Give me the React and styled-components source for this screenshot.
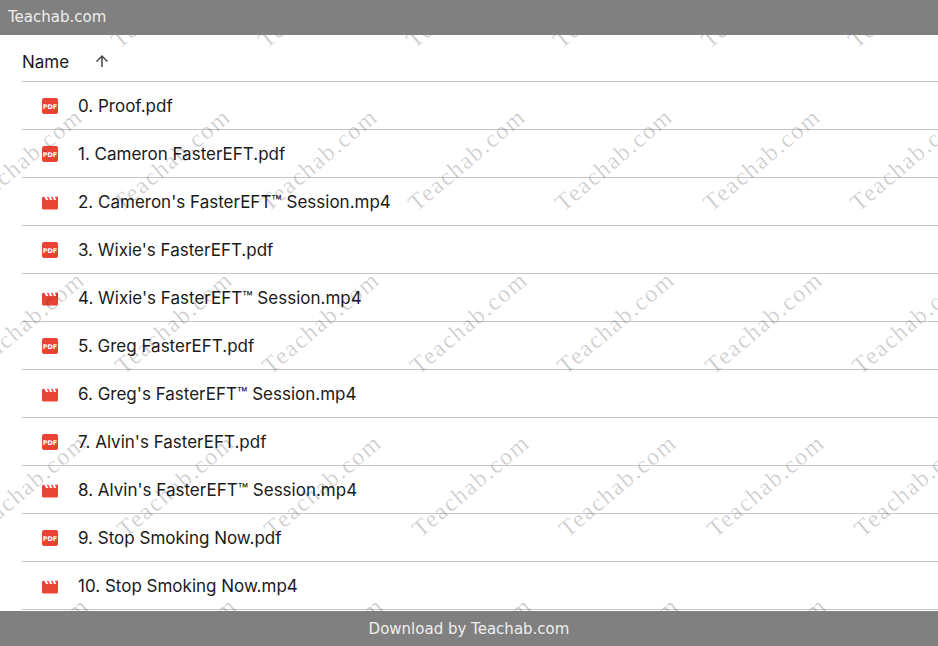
import React from 'react';
import styled, { createGlobalStyle } from 'styled-components';

const files = [
  '0. Proof.pdf',
  '1. Cameron FasterEFT.pdf',
  "2. Cameron's FasterEFT™ Session.mp4",
  "3. Wixie's FasterEFT.pdf",
  "4. Wixie's FasterEFT™ Session.mp4",
  '5. Greg FasterEFT.pdf',
  "6. Greg's FasterEFT™ Session.mp4",
  "7. Alvin's FasterEFT.pdf",
  "8. Alvin's FasterEFT™ Session.mp4",
  '9. Stop Smoking Now.pdf',
  '10. Stop Smoking Now.mp4',
];

const markRows = [-3, 160, 323, 486, 649];
const markCols = [-125, 22, 170, 317, 465, 612, 760, 907];

function PdfIcon() {
  return (
    <IconSvg viewBox="0 0 16 16">
      <rect width="16" height="16" rx="2" fill="#ea4335" />
      <PdfLabel x="8" y="10.8" textAnchor="middle">PDF</PdfLabel>
    </IconSvg>
  );
}

function VideoIcon() {
  return (
    <IconSvg viewBox="2 0.6 20 20">
      <path
        fill="#ea4335"
        d="M18 4l2 4h-3l-2-4h-2l2 4h-3l-2-4H8l2 4H7L5 4H4c-1.1 0-2 .9-2 2v12c0 1.1.9 2 2 2h16c1.1 0 2-.9 2-2V4h-4z"
      />
    </IconSvg>
  );
}

export default function App() {
  return (
    <Page>
      <GlobalStyle />
      <TopBar>Teachab.com</TopBar>
      <Main>
        <HeaderRow>
          <NameLabel>Name</NameLabel>
          <SortIcon viewBox="0 0 24 24">
            <path fill="#444746" d="M4 12l1.41 1.41L11 7.83V20h2V7.83l5.58 5.59L20 12l-8-8-8 8z" />
          </SortIcon>
        </HeaderRow>
        {files.map((name) => (
          <FileRow key={name}>
            {name.endsWith('.pdf') ? <PdfIcon /> : <VideoIcon />}
            <FileName>{name}</FileName>
          </FileRow>
        ))}
        <Marks aria-hidden="true">
          {markRows.map((top, r) =>
            markCols.map((left) => (
              <Mark key={`${r}-${left}`} style={{ left: left + r * 2, top: top - 35 }}>
                Teachab.com
              </Mark>
            ))
          )}
        </Marks>
      </Main>
      <BottomBar>Download by Teachab.com</BottomBar>
    </Page>
  );
}

const GlobalStyle = createGlobalStyle`
  html, body {
    margin: 0;
    height: 100%;
    background: #fff;
  }
`;

const Page = styled.div`
  display: flex;
  flex-direction: column;
  height: 646px;
  overflow: hidden;
`;

const TopBar = styled.div`
  flex: none;
  height: 35px;
  padding-left: 8px;
  background: #808080;
  color: #eee;
  font: 15px/35px 'DejaVu Sans', sans-serif;
  position: relative;
  z-index: 2;
`;

const BottomBar = styled(TopBar)`
  padding-left: 0;
  line-height: 37px;
  text-align: center;
`;

const Main = styled.div`
  flex: 1;
  position: relative;
  overflow: hidden;
  padding-left: 22px;
  font-family: Inter, sans-serif;
  color: #1a1a1a;
`;

const HeaderRow = styled.div`
  display: flex;
  align-items: center;
  height: 38px;
  padding-top: 8px;
  border-bottom: 1px solid #c7c7c7;
`;

const NameLabel = styled.span`
  width: 71px;
  font-size: 17px;
  font-weight: 430;
`;

const SortIcon = styled.svg`
  width: 18px;
  height: 18px;
  margin-top: -2px;
`;

const FileRow = styled.div`
  display: flex;
  align-items: center;
  height: 47px;
  padding-left: 20px;
  border-bottom: 1px solid #c7c7c7;
`;

const IconSvg = styled.svg`
  flex: none;
  width: 16px;
  height: 16px;
`;

const PdfLabel = styled.text`
  font: bold 6.5px 'DejaVu Sans', sans-serif;
  fill: #fff;
`;

const FileName = styled.span`
  margin-left: 20px;
  font-size: 17px;
  font-weight: 430;
  white-space: nowrap;
`;

const Marks = styled.div`
  position: absolute;
  inset: 0;
  pointer-events: none;
`;

const Mark = styled.span`
  position: absolute;
  transform: translate(-50%, -50%) rotate(-40deg);
  font: 24px 'Liberation Serif', serif;
  letter-spacing: 1.6px;
  color: rgba(0, 0, 0, 0.19);
  white-space: nowrap;
`;
